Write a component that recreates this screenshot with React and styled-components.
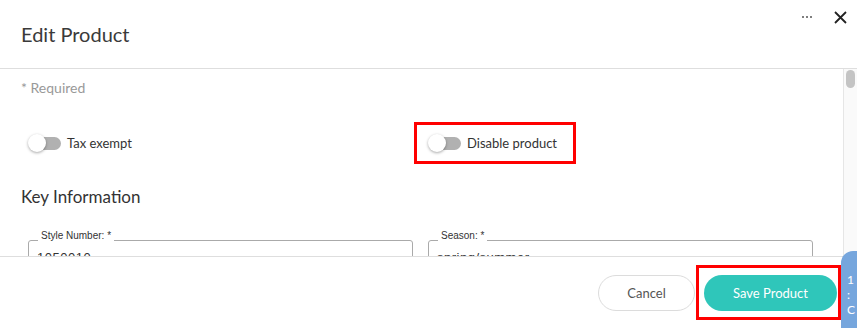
import styled, { createGlobalStyle } from 'styled-components'

const GlobalStyle = createGlobalStyle`
    html, body {
        margin: 0;
        padding: 0;
        background: #fff;
    }
    body {
        font-family: Lato, "Open Sans", sans-serif;
        color: #333;
    }
`

function Toggle() {
    return (
        <Switch>
            <SwitchTrack />
            <SwitchThumb />
        </Switch>
    )
}

function App() {
    return (
        <>
            <GlobalStyle />
            <Modal>
                <Header>
                    <Title>Edit Product</Title>
                    <HeaderActions>
                        <Dots>
                            <span /><span /><span />
                        </Dots>
                        <CloseButton aria-label="close">
                            <svg width="13" height="13" viewBox="0 0 13 13">
                                <path d="M1 1 L12 12 M12 1 L1 12" stroke="#222" strokeWidth="1.8" fill="none" />
                            </svg>
                        </CloseButton>
                    </HeaderActions>
                </Header>

                <Body>
                    <Content>
                        <Required>* Required</Required>
                        <ToggleRow>
                            <ToggleItem>
                                <Toggle />
                                <ToggleLabel>Tax exempt</ToggleLabel>
                            </ToggleItem>
                            <Highlight $pad="9px 16px 9px 11px">
                                <ToggleItem>
                                    <Toggle />
                                    <ToggleLabel>Disable product</ToggleLabel>
                                </ToggleItem>
                            </Highlight>
                        </ToggleRow>
                        <SectionTitle>Key Information</SectionTitle>
                        <Fields>
                            <Field>
                                <FieldLabel>Style Number: *</FieldLabel>
                                <FieldBox>1050010</FieldBox>
                            </Field>
                            <Field>
                                <FieldLabel>Season: *</FieldLabel>
                                <FieldBox>spring/summer</FieldBox>
                            </Field>
                        </Fields>
                    </Content>
                    <ScrollTrack>
                        <ScrollThumb />
                    </ScrollTrack>
                </Body>

                <Footer>
                    <CancelButton>Cancel</CancelButton>
                    <Highlight $pad="7px 1px 6px 5px">
                        <SaveButton>Save Product</SaveButton>
                    </Highlight>
                </Footer>

                <HelpTab>
                    <span>1</span>
                    <span>:</span>
                    <span>C</span>
                </HelpTab>
            </Modal>
        </>
    )
}
export default App;

const Modal = styled.div`
    position: relative;
    width: 857px;
    height: 328px;
    overflow: hidden;
    display: flex;
    flex-direction: column;
    background: #fff;
`
const Header = styled.div`
    height: 68px;
    flex-shrink: 0;
    display: flex;
    justify-content: space-between;
    border-bottom: 1px solid #dedede;
    padding-left: 21px;
    box-sizing: content-box;
`
const Title = styled.h1`
    margin: 0;
    align-self: center;
    font-size: 20px;
    font-weight: 400;
    color: #3a3a3a;
    line-height: 24px;
    margin-top: -1px;
`
const HeaderActions = styled.div`
    display: flex;
    align-items: center;
    gap: 22px;
    height: 34px;
    padding-right: 10px;
`
const Dots = styled.div`
    display: flex;
    gap: 2px;
    margin-top: -1px;
    span{
        width: 2px;
        height: 2px;
        border-radius: 50%;
        background: #555;
    }
`
const CloseButton = styled.button`
    border: none;
    background: none;
    padding: 0;
    width: 13px;
    height: 13px;
    display: flex;
    margin-top: 1px;
`
const Body = styled.div`
    height: 187px;
    flex-shrink: 0;
    display: flex;
    overflow: hidden;
    border-bottom: 1px solid #dedede;
`
const Content = styled.div`
    flex: 1;
    padding-left: 21px;
    padding-top: 9px;
`
const Required = styled.div`
    font-size: 14px;
    line-height: 20px;
    color: #999;
`
const ToggleRow = styled.div`
    display: grid;
    grid-template-columns: 386px auto;
    align-items: center;
    justify-items: start;
    margin-top: 24px;
    margin-left: 7px;
`
const Highlight = styled.div`
    border: 3px solid #ff0000;
    padding: ${p => p.$pad};
    display: flex;
    align-items: center;
`
const ToggleItem = styled.div`
    display: flex;
    align-items: center;
    gap: 6px;
`
const Switch = styled.div`
    position: relative;
    width: 33px;
    height: 18px;
    display: flex;
    align-items: center;
`
const SwitchTrack = styled.div`
    margin-left: 9px;
    width: 24px;
    height: 13px;
    border-radius: 7px;
    background: #b1b1b1;
`
const SwitchThumb = styled.div`
    position: absolute;
    left: 0;
    top: 0;
    width: 18px;
    height: 18px;
    border-radius: 50%;
    background: #fff;
    box-shadow: 0 1px 3px rgba(0, 0, 0, 0.35);
`
const ToggleLabel = styled.span`
    font-size: 13px;
    color: #333;
    line-height: 18px;
`
const SectionTitle = styled.h2`
    margin: 21px 0 0;
    font-size: 17px;
    font-weight: 400;
    line-height: 24px;
    color: #333;
`
const Fields = styled.div`
    display: grid;
    grid-template-columns: 385px 385px;
    column-gap: 15px;
    margin-top: 20px;
    margin-left: 7px;
`
const Field = styled.div`
    display: flex;
    flex-direction: column;
    align-items: flex-start;
`
const FieldLabel = styled.label`
    position: relative;
    z-index: 1;
    margin-left: 10px;
    margin-bottom: -2px;
    padding: 0 3px;
    background: #fff;
    font-family: "Liberation Sans", Arial, sans-serif;
    font-size: 10px;
    line-height: 13px;
    color: #333;
`
const FieldBox = styled.div`
    align-self: stretch;
    height: 36px;
    box-sizing: border-box;
    border: 1px solid #aaa;
    border-radius: 3px;
    padding: 9px 8px;
    font-family: "Liberation Sans", Arial, sans-serif;
    font-size: 13px;
    color: #333;
    letter-spacing: 0.5px;
`
const ScrollTrack = styled.div`
    width: 13px;
    flex-shrink: 0;
    border-left: 1px solid #e6e6e6;
    background: #fafafa;
    padding-top: 1px;
    display: flex;
    justify-content: center;
`
const ScrollThumb = styled.div`
    width: 9px;
    height: 18px;
    border-radius: 5px;
    background: #c4c4c4;
`
const Footer = styled.div`
    flex: 1;
    display: flex;
    align-items: center;
    justify-content: flex-end;
    gap: 1px;
    padding-right: 16px;
`
const PillButton = styled.button`
    height: 36px;
    border-radius: 18px;
    font-family: Lato, sans-serif;
    font-size: 13px;
    cursor: pointer;
`
const CancelButton = styled(PillButton)`
    width: 97px;
    border: 1px solid #dcdcdc;
    background: #fff;
    color: #555;
`
const SaveButton = styled(PillButton)`
    width: 133px;
    border: none;
    background: #2fc6ba;
    color: #fff;
`
const HelpTab = styled.div`
    position: absolute;
    left: 841px;
    top: 251px;
    width: 40px;
    height: 90px;
    border-top-left-radius: 12px;
    background: #76a6dd;
    display: flex;
    flex-direction: column;
    gap: 2px;
    padding: 22px 0 0 6px;
    box-sizing: border-box;
    span{
        font-family: Lato, sans-serif;
        font-size: 12px;
        line-height: 13px;
        color: #fff;
    }
`
